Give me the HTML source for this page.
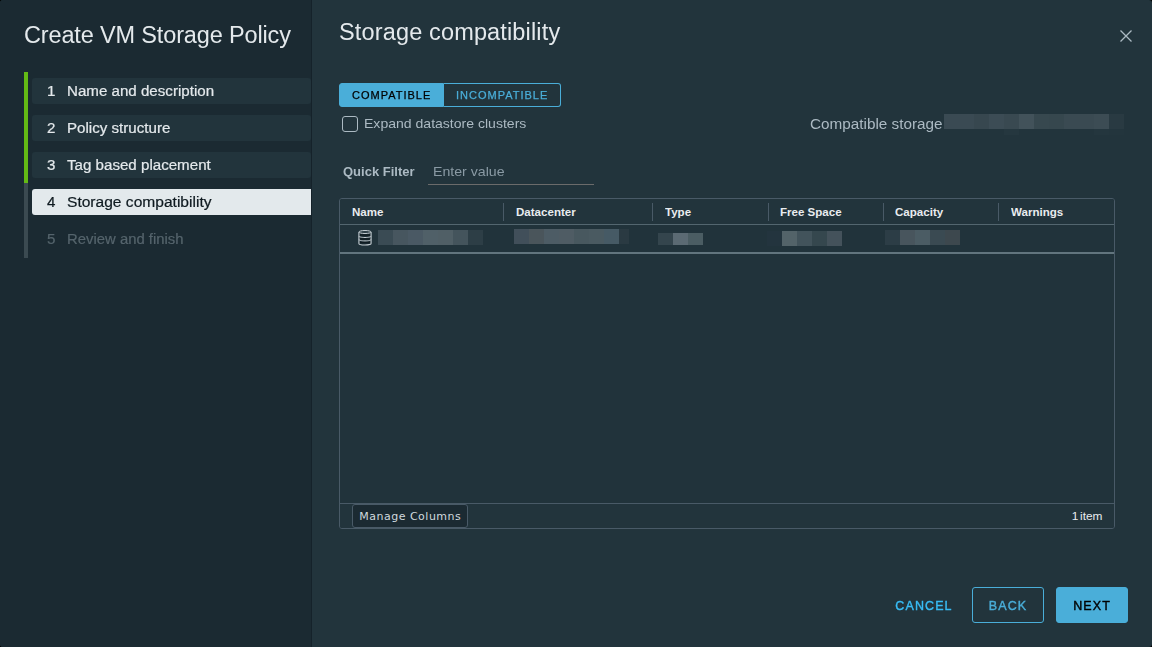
<!DOCTYPE html>
<html lang="en">
<head>
<meta charset="utf-8">
<title>Create VM Storage Policy</title>
<style>
*{box-sizing:border-box;margin:0;padding:0}
html,body{width:1152px;height:647px;overflow:hidden;background:#000}
body{font-family:"Liberation Sans",sans-serif;color:#e9ecef;position:relative}
.modal{position:absolute;left:0;top:0;width:1152px;height:647px;border-radius:3px;overflow:hidden;background:#22343c}
.side{position:absolute;left:0;top:0;width:312px;height:647px;background:#1b2a32;border-right:1px solid #15222a}
.side h1{position:absolute;left:24px;top:19px;font-size:23.5px;font-weight:400;color:#e4e9ec;letter-spacing:-0.15px;white-space:nowrap;line-height:32px}
.bar{position:absolute;left:24px;width:4px}
.bar.g{top:72px;height:111px;background:#64ba15}
.bar.d{top:183px;height:75px;background:#3b4a51}
.step{position:absolute;left:32px;width:279px;height:26px;border-radius:3px;background:#22343c;font-size:14px;line-height:26px;color:#e4e9ec;white-space:nowrap}
.step .n{position:absolute;left:15.4px;transform:scaleX(1.08);transform-origin:0 50%;-webkit-text-stroke:.2px currentColor}
.step .t{position:absolute;left:35px;transform:scaleX(1.08);transform-origin:0 50%;-webkit-text-stroke:.2px currentColor}
.step.act{background:#e3e9ec;color:#0f1a20;border-radius:3px 0 0 3px}
.step.dis{background:transparent;color:#55646c}
.main h2{position:absolute;left:339px;top:16px;font-size:23.5px;font-weight:400;line-height:32px;color:#e4e9ec;white-space:nowrap;letter-spacing:.15px}
.close{position:absolute;left:1119px;top:29px;width:14px;height:14px}
.bg{position:absolute;left:339px;top:83px;height:24px;display:flex}
.bg span{display:block}
.btn span{display:block}
.bg div{height:24px;line-height:22px;font-size:11px;letter-spacing:1px;border:1px solid #4aaed9;padding:0 12px;-webkit-text-stroke:.25px currentColor}
.bg .a{background:#4aaed9;color:#000;border-radius:3px 0 0 3px;width:105px}
.bg .b{color:#4aaed9;border-radius:0 3px 3px 0;border-left:0;width:117px}
.cb{position:absolute;left:342px;top:116px;width:16px;height:16px;border:1px solid #acbac3;border-radius:3px}
.cbl{position:absolute;left:364px;top:114px;font-size:13px;line-height:20px;color:#acbac3;white-space:nowrap;transform:scaleX(1.08);transform-origin:0 50%}
.cs{position:absolute;left:810px;top:114px;font-size:14px;line-height:20px;color:#acbac3;white-space:nowrap;transform:scaleX(1.092);transform-origin:0 50%}
.qf{position:absolute;left:343px;top:162px;font-size:13px;font-weight:700;line-height:20px;color:#acbac3;white-space:nowrap}
.qi{position:absolute;left:428px;top:160px;width:166px;height:25px;border-bottom:1px solid #6b6b6b;font-size:13px;line-height:24px;color:#8a9aa4;padding-left:5px}
.qi span{display:inline-block;transform:scaleX(1.088);transform-origin:0 50%;will-change:transform}
.grid{position:absolute;left:339px;top:198px;width:776px;height:331px;border:1px solid #495a67;border-radius:3px;background:#21333b;overflow:hidden}
.hdr{position:absolute;left:0;top:0;width:774px;height:26px;border-bottom:1px solid #53666f;background:#22343c}
.hdr span{position:absolute;top:0;font-size:11px;font-weight:700;line-height:26px;color:#e9ecef;transform:scaleX(1.05);transform-origin:0 50%}
.hdr i{position:absolute;top:4px;width:1px;height:18px;background:#495a67}
.row{position:absolute;left:0;top:26px;width:774px;height:29px;border-bottom:2px solid #62757e}
.ftr{position:absolute;left:0;bottom:0;width:774px;height:25px;border-top:1px solid #495a67;background:#22343c}
.mc{position:absolute;left:12px;top:0px;height:24px;width:116px;border:1px solid #495a67;border-radius:3px;font-family:'DejaVu Sans',sans-serif;font-size:11px;line-height:24px;text-align:center;color:#d0d9de;background:#1b2a32;letter-spacing:.5px;text-indent:.5px}
.cnt{position:absolute;right:12px;top:0;font-size:11px;line-height:25px;color:#e9ecef;transform:scaleX(1.08);transform-origin:100% 50%;word-spacing:-1.5px;white-space:nowrap}
.side h1,.step span,.main h2,.bg span,.cbl,.cs,.qf,.btn span{will-change:transform}
.px i{position:absolute;display:block}
.dsi{position:absolute;left:358px;top:230px;width:14px;height:16px}
.btn{position:absolute;top:587px;height:36px;width:72px;border-radius:3px;font-size:12.5px;letter-spacing:1.1px;line-height:36px;text-align:center;-webkit-text-stroke:.4px currentColor}
.cancel{left:884px;width:80px;color:#38bcf5;border:1px solid transparent}
.back{left:972px;color:#4aaed9;border:1px solid #4aaed9}
.next{left:1056px;color:#000;background:#4aaed9;border:1px solid #4aaed9}
</style>
</head>
<body>
<div class="modal">
 <div class="side">
  <h1>Create VM Storage Policy</h1>
  <div class="bar g"></div><div class="bar d"></div>
  <div class="step" style="top:78px"><span class="n">1</span><span class="t">Name and description</span></div>
  <div class="step" style="top:115px"><span class="n">2</span><span class="t">Policy structure</span></div>
  <div class="step" style="top:152px"><span class="n">3</span><span class="t">Tag based placement</span></div>
  <div class="step act" style="top:189px"><span class="n">4</span><span class="t" style="transform:scaleX(1.112)">Storage compatibility</span></div>
  <div class="step dis" style="top:226px"><span class="n">5</span><span class="t" style="transform:scaleX(1.062)">Review and finish</span></div>
 </div>
 <div class="main">
  <h2>Storage compatibility</h2>
  <svg class="close" viewBox="0 0 14 14"><path d="M1.5 1.5 L12.5 12.5 M12.5 1.5 L1.5 12.5" stroke="#acbac3" stroke-width="1.3" fill="none"/></svg>
  <div class="bg"><div class="a"><span>COMPATIBLE</span></div><div class="b"><span>INCOMPATIBLE</span></div></div>
  <div class="cb"></div><div class="cbl">Expand datastore clusters</div>
  <div class="cs">Compatible storage</div>
    <div class="qf">Quick Filter</div>
  <div class="qi"><span>Enter value</span></div>
  <div class="grid">
   <div class="hdr">
    <span style="left:12px">Name</span><i style="left:163px"></i>
    <span style="left:176px">Datacenter</span><i style="left:312px"></i>
    <span style="left:325px">Type</span><i style="left:428px"></i>
    <span style="left:440px">Free Space</span><i style="left:543px"></i>
    <span style="left:555px">Capacity</span><i style="left:658px"></i>
    <span style="left:671px">Warnings</span>
   </div>
   <div class="row"></div>
   <div class="ftr"><div class="mc">Manage Columns</div><div class="cnt">1 item</div></div>
  </div>
  <svg class="dsi" viewBox="0 0 14 16"><path d="M0.9 2 V13.4 C0.9 14.3 3.6 15 7 15 S13.1 14.3 13.1 13.4 V2" fill="#1d2c34" stroke="none"/><path d="M2 4.9 H12 M2 8.9 H12 M2 12.6 H12" stroke="#0f1b21" stroke-width="1.5" fill="none"/><path d="M0.9 2 V13.4 C0.9 14.3 3.6 15 7 15 S13.1 14.3 13.1 13.4 V2" fill="none" stroke="#c3ccd1" stroke-width="1.1"/><ellipse cx="7" cy="2" rx="6.1" ry="1.5" fill="#2b3c44" stroke="#c3ccd1" stroke-width="1"/><path d="M0.9 6 C0.9 6.9 3.6 7.5 7 7.5 S13.1 6.9 13.1 6 M0.9 9.4 C0.9 10.3 3.6 10.9 7 10.9 S13.1 10.3 13.1 9.4" fill="none" stroke="#c3ccd1" stroke-width="1"/></svg>
  <div class="px"><i style="left:944px;top:114px;width:15px;height:15px;background:#3a4a53"></i><i style="left:959px;top:114px;width:15px;height:15px;background:#3a4a53"></i><i style="left:974px;top:114px;width:15px;height:15px;background:#37474f"></i><i style="left:989px;top:114px;width:15px;height:15px;background:#3c4c55"></i><i style="left:1004px;top:114px;width:15px;height:15px;background:#394951"></i><i style="left:1019px;top:114px;width:15px;height:15px;background:#42525a"></i><i style="left:1034px;top:114px;width:15px;height:15px;background:#37484f"></i><i style="left:1049px;top:114px;width:15px;height:15px;background:#36474e"></i><i style="left:1064px;top:114px;width:15px;height:15px;background:#3a4a52"></i><i style="left:1079px;top:114px;width:15px;height:15px;background:#3a4a52"></i><i style="left:1094px;top:114px;width:15px;height:15px;background:#3c4c54"></i><i style="left:1109px;top:114px;width:15px;height:15px;background:#293a42"></i><i style="left:1004px;top:129px;width:15px;height:6px;background:#25373f"></i><i style="left:1094px;top:129px;width:15px;height:6px;background:#24363e"></i><i style="left:1109px;top:129px;width:15px;height:6px;background:#23353d"></i><i style="left:378px;top:230px;width:15px;height:15px;background:#3a4b54"></i><i style="left:393px;top:230px;width:15px;height:15px;background:#47565f"></i><i style="left:408px;top:230px;width:15px;height:15px;background:#4a5964"></i><i style="left:423px;top:230px;width:15px;height:15px;background:#506068"></i><i style="left:438px;top:230px;width:15px;height:15px;background:#505f66"></i><i style="left:453px;top:230px;width:15px;height:15px;background:#44545c"></i><i style="left:468px;top:230px;width:15px;height:15px;background:#2d3e46"></i><i style="left:514px;top:229px;width:15px;height:15px;background:#414f5a"></i><i style="left:529px;top:229px;width:15px;height:15px;background:#4a555b"></i><i style="left:544px;top:229px;width:15px;height:15px;background:#4d5c65"></i><i style="left:559px;top:229px;width:15px;height:15px;background:#4f5c64"></i><i style="left:574px;top:229px;width:15px;height:15px;background:#48585f"></i><i style="left:589px;top:229px;width:15px;height:15px;background:#4a5a61"></i><i style="left:604px;top:229px;width:15px;height:15px;background:#465a65"></i><i style="left:619px;top:229px;width:10px;height:15px;background:#2a3a42"></i><i style="left:658px;top:233px;width:15px;height:12px;background:#34454d"></i><i style="left:673px;top:233px;width:15px;height:12px;background:#5b6a73"></i><i style="left:688px;top:233px;width:15px;height:12px;background:#4b5d63"></i><i style="left:767px;top:231px;width:15px;height:15px;background:#23343e"></i><i style="left:782px;top:231px;width:15px;height:15px;background:#536369"></i><i style="left:797px;top:231px;width:15px;height:15px;background:#42535b"></i><i style="left:812px;top:231px;width:15px;height:15px;background:#35474e"></i><i style="left:827px;top:231px;width:15px;height:15px;background:#44525b"></i><i style="left:885px;top:230px;width:15px;height:15px;background:#2c3d46"></i><i style="left:900px;top:230px;width:15px;height:15px;background:#48555d"></i><i style="left:915px;top:230px;width:15px;height:15px;background:#4b5c64"></i><i style="left:930px;top:230px;width:15px;height:15px;background:#3a4a52"></i><i style="left:945px;top:230px;width:15px;height:15px;background:#3d484e"></i></div>
  <div class="btn cancel"><span>CANCEL</span></div>
  <div class="btn back"><span>BACK</span></div>
  <div class="btn next"><span>NEXT</span></div>
 </div>
</div>
</body>
</html>
